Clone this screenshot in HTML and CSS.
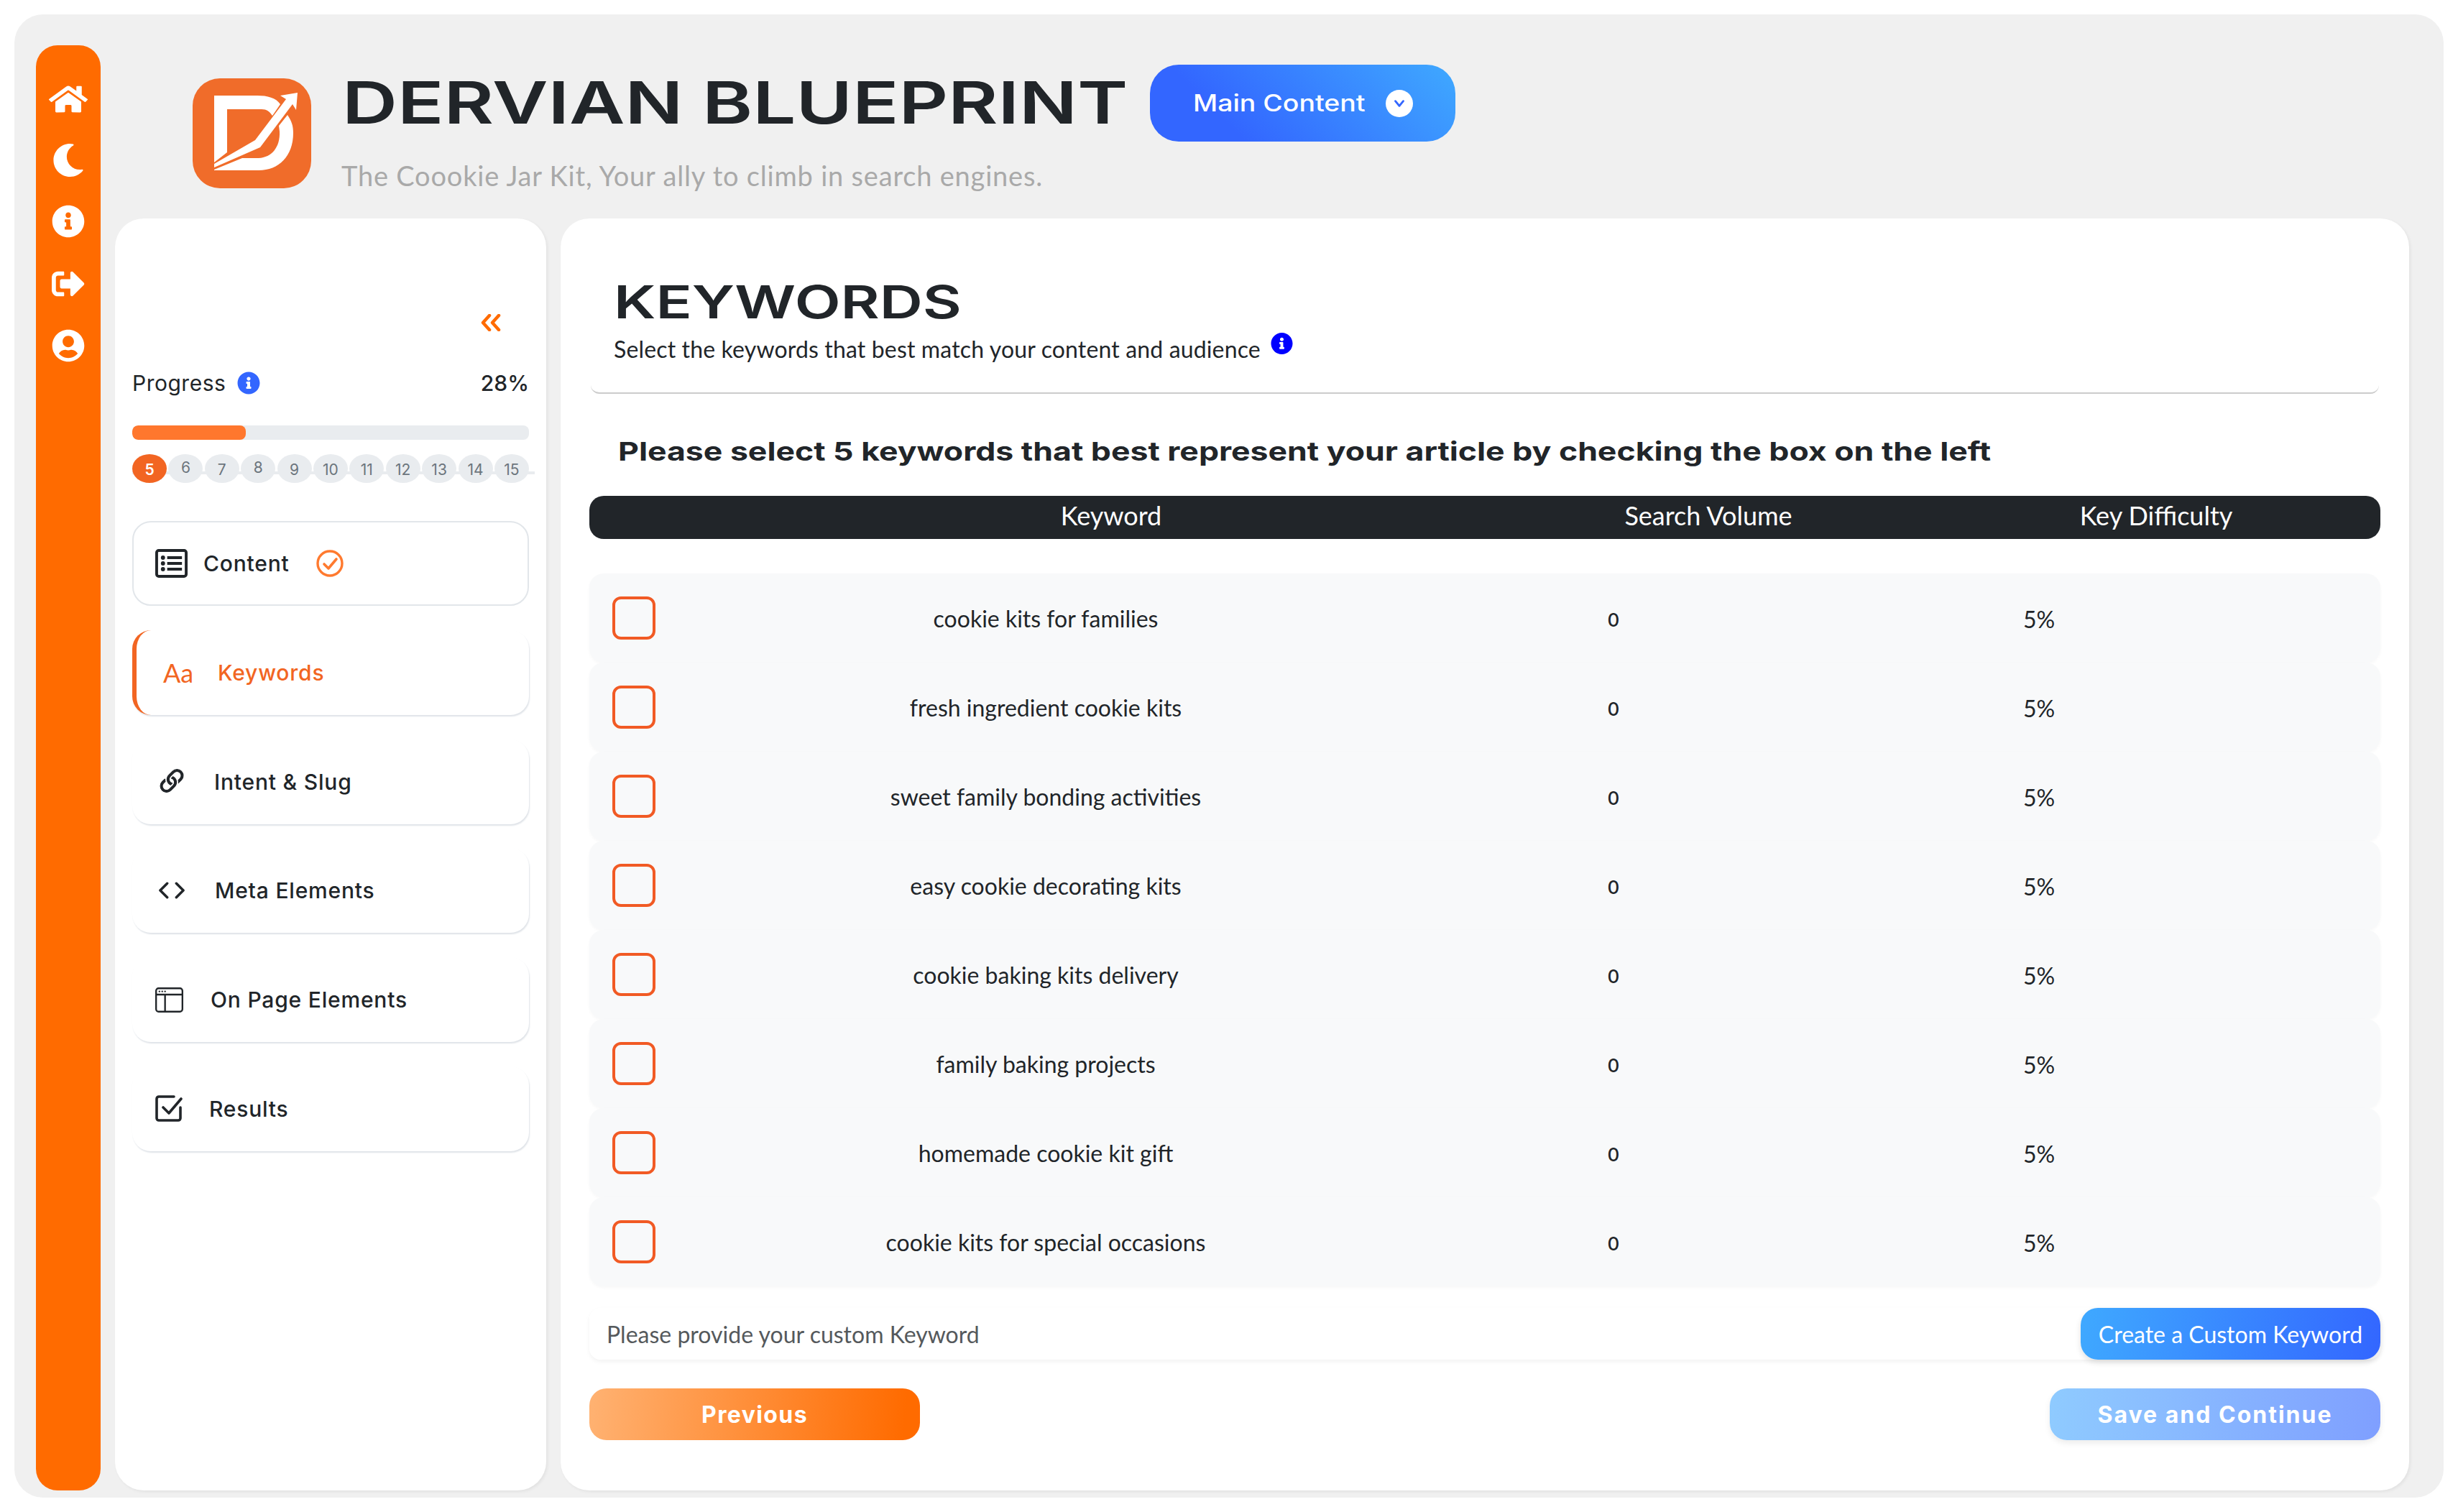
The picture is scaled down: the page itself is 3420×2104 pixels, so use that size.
FILE: index.html
```html
<!DOCTYPE html>
<html lang="en">
<head>
<meta charset="utf-8">
<title>Dervian Blueprint - Keywords</title>
<link rel="stylesheet" href="styles.css">
</head>
<body>
<div class="shell">
  <nav class="rail">
    <svg class="rail-home" viewBox="0 0 576 512" preserveAspectRatio="none"><path d="M280.37 148.26L96 300.11V464a16 16 0 0 0 16 16l112.06-.29a16 16 0 0 0 15.92-16V368a16 16 0 0 1 16-16h64a16 16 0 0 1 16 16v95.64a16 16 0 0 0 16 16.05L464 480a16 16 0 0 0 16-16V300L295.67 148.26a12.19 12.19 0 0 0-15.3 0zM571.6 251.47L488 182.56V44.05a12 12 0 0 0-12-12h-56a12 12 0 0 0-12 12v72.61L318.47 43a48 48 0 0 0-61 0L4.34 251.47a12 12 0 0 0-1.6 16.9l25.5 31A12 12 0 0 0 45.15 301l235.22-193.74a12.19 12.19 0 0 1 15.3 0L530.9 301a12 12 0 0 0 16.9-1.6l25.5-31a12 12 0 0 0-1.7-16.93z"/></svg>
    <svg class="rail-ico" viewBox="0 0 512 512"><path d="M283.211 512c78.962 0 151.079-35.925 198.857-94.792 7.068-8.708-.639-21.43-11.562-19.35-124.203 23.654-238.262-71.576-238.262-196.954 0-72.222 38.662-138.635 101.498-174.394 9.686-5.512 7.25-20.197-3.756-22.23A258.156 258.156 0 0 0 283.211 0c-141.309 0-256 114.511-256 256 0 141.309 114.511 256 256 256z"/></svg>
    <svg class="rail-ico" viewBox="0 0 512 512"><path d="M256 8C119.043 8 8 119.083 8 256c0 136.997 111.043 248 248 248s248-111.003 248-248C504 119.083 392.957 8 256 8zm0 110c23.196 0 42 18.804 42 42s-18.804 42-42 42-42-18.804-42-42 18.804-42 42-42zm56 254c0 6.627-5.373 12-12 12h-88c-6.627 0-12-5.373-12-12v-24c0-6.627 5.373-12 12-12h12v-64h-12c-6.627 0-12-5.373-12-12v-24c0-6.627 5.373-12 12-12h64c6.627 0 12 5.373 12 12v100h12c6.627 0 12 5.373 12 12v24z"/></svg>
    <svg class="rail-ico rail-gap" viewBox="0 0 512 512"><path d="M497 273L329 441c-15 15-41 4.5-41-17v-96H152c-13.3 0-24-10.7-24-24v-96c0-13.3 10.7-24 24-24h136V88c0-21.4 25.9-32 41-17l168 168c9.3 9.4 9.3 24.6 0 34zM192 436v-40c0-6.6-5.4-12-12-12H96c-17.7 0-32-14.3-32-32V160c0-17.7 14.3-32 32-32h84c6.6 0 12-5.4 12-12V76c0-6.6-5.4-12-12-12H96c-53 0-96 43-96 96v192c0 53 43 96 96 96h84c6.6 0 12-5.4 12-12z"/></svg>
    <svg class="rail-ico" viewBox="0 0 496 512"><path d="M248 8C111 8 0 119 0 256s111 248 248 248 248-111 248-248S385 8 248 8zm0 96c48.6 0 88 39.4 88 88s-39.4 88-88 88-88-39.4-88-88 39.4-88 88-88zm0 344c-58.7 0-111.3-26.6-146.5-68.2 18.8-35.4 55.6-59.8 98.5-59.8 2.4 0 4.8.4 7.1 1.1 13 4.2 26.6 6.9 40.9 6.9 14.3 0 28-2.7 40.9-6.9 2.3-.7 4.7-1.1 7.1-1.1 42.9 0 79.7 24.4 98.5 59.8C359.3 421.4 306.7 448 248 448z"/></svg>
  </nav>

  <div class="column">
    <header class="top">
      <svg class="logo" viewBox="0 0 165 153" preserveAspectRatio="none">
        <rect width="165" height="153" rx="38" ry="38" fill="#f06c2a"/>
        <path fill="#fff" d="M30 24H90C104 24 116 27 122 36L111 52C107 46 103 43 96 43H48V103L30 117Z"/>
        <path fill="#fff" d="M30 119L87 86L130 29L122 24L146 20L144 44L139 36L94 96L30 124Z"/>
        <path fill="#fff" d="M30 127L69 111H92C110 110 122 96 121 74L120 66L132 51C138 60 140 66 140 76C140 108 120 128 92 128H30Z"/>
      </svg>
      <div class="brand">
        <div class="brand-row">
          <div class="brand-title"><h1>DERVIAN BLUEPRINT</h1></div>
          <button class="main-btn">
            <span class="main-btn-label"><span class="main-btn-text">Main Content</span></span>
            <span class="main-btn-dot">
              <svg viewBox="0 0 20 20"><path d="M5 7l5 6 5-6" fill="none" stroke="#3366ff" stroke-width="2.6" stroke-linecap="round" stroke-linejoin="round"/></svg>
            </span>
          </button>
        </div>
        <p class="brand-sub">The Coookie Jar Kit, Your ally to climb in search engines.</p>
      </div>
    </header>

    <div class="panels">
      <aside class="side">
        <svg class="collapse" viewBox="0 0 30 24"><path d="M13 2L4 12l9 10M26 2l-9 10 9 10" fill="none" stroke="#ff6b00" stroke-width="4.5" stroke-linecap="round" stroke-linejoin="round"/></svg>
        <div class="progress-head">
          <span class="progress-label">Progress</span>
          <svg class="progress-info" viewBox="0 0 512 512"><path d="M256 8C119.043 8 8 119.083 8 256c0 136.997 111.043 248 248 248s248-111.003 248-248C504 119.083 392.957 8 256 8zm0 110c23.196 0 42 18.804 42 42s-18.804 42-42 42-42-18.804-42-42 18.804-42 42-42zm56 254c0 6.627-5.373 12-12 12h-88c-6.627 0-12-5.373-12-12v-24c0-6.627 5.373-12 12-12h12v-64h-12c-6.627 0-12-5.373-12-12v-24c0-6.627 5.373-12 12-12h64c6.627 0 12 5.373 12 12v100h12c6.627 0 12 5.373 12 12v24z"/></svg>
          <span class="progress-pct">28%</span>
        </div>
        <div class="bar"><div class="bar-fill"></div></div>
        <div class="steps">
          <span class="step step-on">5</span>
          <span class="step step-up">6</span>
          <span class="step">7</span>
          <span class="step step-up">8</span>
          <span class="step">9</span>
          <span class="step">10</span>
          <span class="step">11</span>
          <span class="step">12</span>
          <span class="step">13</span>
          <span class="step">14</span>
          <span class="step">15</span>
        </div>
        <ul class="nav">
          <li class="nav-item nav-done">
            <svg class="ni ni-list" viewBox="0 0 46 40" preserveAspectRatio="none"><rect x="2" y="2" width="42" height="36" rx="3" fill="none" stroke="#212529" stroke-width="4"/><g fill="#212529"><circle cx="11" cy="12" r="3"/><circle cx="11" cy="20" r="3"/><circle cx="11" cy="28" r="3"/><rect x="17" y="10" width="21" height="4"/><rect x="17" y="18" width="21" height="4"/><rect x="17" y="26" width="21" height="4"/></g></svg>
            <span>Content</span>
            <svg class="ni-check" viewBox="0 0 38 38"><circle cx="19" cy="19" r="17" fill="none" stroke="#ff7a2f" stroke-width="3.4"/><path d="M11 20l6 6 11-13" fill="none" stroke="#ff7a2f" stroke-width="3.6" stroke-linecap="round" stroke-linejoin="round"/></svg>
          </li>
          <li class="nav-item nav-active">
            <span class="aa">Aa</span>
            <span>Keywords</span>
          </li>
          <li class="nav-item">
            <svg class="ni ni-link" viewBox="0 0 16 16"><g fill="#212529" stroke="#212529" stroke-width=".4"><path d="M4.715 6.542 3.343 7.914a3 3 0 1 0 4.243 4.243l1.828-1.829A3 3 0 0 0 8.586 5.5L8 6.086a1.002 1.002 0 0 0-.154.199 2 2 0 0 1 .861 3.337L6.88 11.45a2 2 0 1 1-2.83-2.83l.793-.792a4.018 4.018 0 0 1-.128-1.287z"/><path d="M6.586 4.672A3 3 0 0 0 7.414 9.5l.775-.776a2 2 0 0 1-.896-3.346L9.12 3.55a2 2 0 1 1 2.83 2.83l-.793.792c.112.42.155.855.128 1.287l1.372-1.372a3 3 0 1 0-4.243-4.243L6.586 4.672z"/></g></svg>
            <span>Intent &amp; Slug</span>
          </li>
          <li class="nav-item">
            <svg class="ni ni-code" viewBox="0 0 39 24"><path d="M13 2L3 12l10 10M26 2l10 10-10 10" fill="none" stroke="#212529" stroke-width="3.6" stroke-linecap="round" stroke-linejoin="round"/></svg>
            <span>Meta Elements</span>
          </li>
          <li class="nav-item">
            <svg class="ni ni-win" viewBox="0 0 40 35" preserveAspectRatio="none"><rect x="1.2" y="1.2" width="37.6" height="32.6" rx="3.5" fill="none" stroke="#212529" stroke-width="2.4"/><path d="M1 10h38M14 10v24" stroke="#212529" stroke-width="2.4"/><g fill="#212529"><circle cx="6" cy="5.6" r="1.2"/><circle cx="10" cy="5.6" r="1.2"/><circle cx="14" cy="5.6" r="1.2"/></g></svg>
            <span>On Page Elements</span>
          </li>
          <li class="nav-item">
            <svg class="ni ni-res" viewBox="0 0 38 37"><path d="M26 2H5a3 3 0 0 0-3 3v27a3 3 0 0 0 3 3h27a3 3 0 0 0 3-3V17" fill="none" stroke="#212529" stroke-width="3.6" stroke-linecap="round"/><path d="M11 17l8 8L36 5" fill="none" stroke="#212529" stroke-width="3.6" stroke-linecap="round" stroke-linejoin="round"/></svg>
            <span>Results</span>
          </li>
        </ul>
      </aside>

      <main class="main">
        <div class="main-head">
          <h2>KEYWORDS</h2>
          <div class="main-sub">
            <span>Select the keywords that best match your content and audience</span>
            <svg class="main-info" viewBox="0 0 512 512"><path d="M256 8C119.043 8 8 119.083 8 256c0 136.997 111.043 248 248 248s248-111.003 248-248C504 119.083 392.957 8 256 8zm0 110c23.196 0 42 18.804 42 42s-18.804 42-42 42-42-18.804-42-42 18.804-42 42-42zm56 254c0 6.627-5.373 12-12 12h-88c-6.627 0-12-5.373-12-12v-24c0-6.627 5.373-12 12-12h12v-64h-12c-6.627 0-12-5.373-12-12v-24c0-6.627 5.373-12 12-12h64c6.627 0 12 5.373 12 12v100h12c6.627 0 12 5.373 12 12v24z"/></svg>
          </div>
        </div>
        <h3>Please select 5 keywords that best represent your article by checking the box on the left</h3>
        <div class="thead"><span>Keyword</span><span>Search Volume</span><span>Key Difficulty</span></div>
        <div class="rows">
          <div class="row"><span class="box"></span><span>cookie kits for families</span><span class="zero">0</span><span class="pct">5%</span></div>
          <div class="row"><span class="box"></span><span>fresh ingredient cookie kits</span><span class="zero">0</span><span class="pct">5%</span></div>
          <div class="row"><span class="box"></span><span>sweet family bonding activities</span><span class="zero">0</span><span class="pct">5%</span></div>
          <div class="row"><span class="box"></span><span>easy cookie decorating kits</span><span class="zero">0</span><span class="pct">5%</span></div>
          <div class="row"><span class="box"></span><span>cookie baking kits delivery</span><span class="zero">0</span><span class="pct">5%</span></div>
          <div class="row"><span class="box"></span><span>family baking projects</span><span class="zero">0</span><span class="pct">5%</span></div>
          <div class="row"><span class="box"></span><span>homemade cookie kit gift</span><span class="zero">0</span><span class="pct">5%</span></div>
          <div class="row"><span class="box"></span><span>cookie kits for special occasions</span><span class="zero">0</span><span class="pct">5%</span></div>
        </div>
        <div class="custom">
          <div class="custom-field">Please provide your custom Keyword</div>
          <button class="custom-btn">Create a Custom Keyword</button>
        </div>
        <div class="foot">
          <button class="prev">Previous</button>
          <button class="save">Save and Continue</button>
        </div>
      </main>
    </div>
  </div>
</div>
</body>
</html>
```
FILE: styles.css
```css
* { box-sizing: border-box; }
html, body { margin: 0; padding: 0; background: #fff; }
body { font-family: "Lato", "Liberation Sans", sans-serif; color: #212529; }
h1, h2, h3, p, ul { margin: 0; padding: 0; }
button { border: 0; font-family: inherit; color: #fff; padding: 0; }

.shell {
  margin: 20px;
  width: 3380px;
  height: 2064px;
  display: flex;
  gap: 20px;
  padding: 43px 48px 10px 30px;
  background: #f0f0f0;
  border-radius: 40px;
}

.rail {
  width: 90px;
  flex: none;
  background: #ff6b00;
  border-radius: 30px;
  display: flex;
  flex-direction: column;
  align-items: center;
  padding-top: 54px;
}
.rail svg { fill: #fff; display: block; }
.rail-home { width: 54px; height: 42px; margin-bottom: 41px; }
.rail-ico { width: 46px; height: 46px; margin-bottom: 39px; }
.rail-gap { margin-top: 2px; margin-bottom: 40px; }

.column { flex: 1; display: flex; flex-direction: column; min-width: 0; }

.top { height: 241px; flex: none; display: flex; padding-left: 108px; }
.logo { width: 165px; height: 153px; margin-top: 46px; flex: none; }
.brand { margin-left: 42px; padding-top: 27px; }
.brand-row { display: flex; }
.brand-title { width: 1125px; height: 107px; }
h1 {
  width: max-content;
  font-family: "Inter", sans-serif;
  font-size: 81px;
  font-weight: 600;
  line-height: 107px;
  white-space: nowrap;
  margin-left: 1px;
  transform: scaleX(1.315);
  transform-origin: left center;
}
.main-btn {
  width: 425px;
  height: 107px;
  border-radius: 40px;
  background: linear-gradient(45deg, #3366ff 25%, #3fa9ff 100%);
  display: flex;
  align-items: center;
  padding-left: 60px;
}
.main-btn-label { font-family: "Inter", sans-serif; font-size: 32px; font-weight: 500; width: 268px; text-align: left; white-space: nowrap; }
.main-btn-text { display: inline-block; transform: scaleX(1.17); transform-origin: left center; }
.main-btn-dot { width: 38px; height: 38px; border-radius: 50%; background: #fff; display: flex; align-items: center; justify-content: center; }
.main-btn-dot svg { width: 22px; height: 22px; }
.brand-sub { margin-top: 27px; font-size: 38px; line-height: 40px; letter-spacing: .8px; color: #a9a9a9; white-space: nowrap; }

.panels { flex: 1; display: flex; gap: 20px; min-height: 0; }

.side {
  width: 600px;
  flex: none;
  background: #fff;
  border-radius: 40px;
  box-shadow: 2px 2px 4px rgba(0,0,0,.06);
  padding: 133px 24px 0 24px;
}
.collapse { display: block; width: 30px; height: 24px; margin-left: auto; margin-right: 38px; }
.progress-head { margin-top: 54px; height: 36px; display: flex; align-items: center; font-family: "Inter", sans-serif; font-size: 30px; }
.progress-label { letter-spacing: .5px; }
.progress-info { width: 32px; height: 32px; margin-left: 16px; fill: #3366ff; }
.progress-pct { margin-left: auto; font-weight: 500; }
.bar { margin-top: 41px; height: 20px; background: #e9ecef; border-radius: 8px; overflow: hidden; }
.bar-fill { width: 28.6%; height: 100%; background: #ff772d; border-radius: 8px; }
.steps {
  position: relative;
  margin-top: 20px;
  height: 40px;
  display: flex;
  justify-content: space-between;
  font-family: "Inter", sans-serif;
  font-size: 21px;
}
.steps::before { content: ""; position: absolute; left: 0; right: -8px; top: 24px; height: 4px; background: #e9ecef; }
.step {
  position: relative;
  width: 48px;
  height: 40px;
  border-radius: 50%;
  background: #e9ecef;
  color: #6c757d;
  display: flex;
  align-items: center;
  justify-content: center;
  padding-top: 2px;
}
.step-up { padding-top: 0; padding-bottom: 3px; }
.step-on { background: #f26522; color: #fff; font-weight: 600; }

.nav { list-style: none; margin-top: 53px; display: flex; flex-direction: column; gap: 33.8px; }
.nav-item {
  height: 118px;
  border-radius: 26px;
  background: #fff;
  box-shadow: 1px 2px 2px #dfe3e8;
  display: flex;
  align-items: center;
  padding-left: 32px;
  font-family: "Inter", sans-serif;
  font-size: 30px;
  font-weight: 500;
  letter-spacing: .8px;
}
.nav-done { border: 2px solid #e2e6ea; padding-left: 30px; box-shadow: none; }
.nav-active { border-left: 6px solid #f26522; padding-left: 37px; color: #f26522; }
.aa { width: 39px; margin-right: 37px; font-family: "Lato", sans-serif; font-size: 36px; font-weight: 400; white-space: nowrap; letter-spacing: 0; }
.ni { flex: none; display: block; }
.ni-list { width: 45px; height: 40px; margin-right: 22px; }
.ni-check { width: 38px; height: 38px; margin-left: 37px; }
.ni-link { width: 46px; height: 46px; margin: 0 36px 0 0; }
.ni-code { width: 38px; height: 24px; margin: 0 41px 0 4px; }
.ni-win { width: 39px; height: 35px; margin-right: 38px; }
.ni-res { width: 38px; height: 37px; margin-right: 37px; }

.main {
  flex: 1;
  background: #fff;
  border-radius: 40px;
  box-shadow: 2px 2px 4px rgba(0,0,0,.06);
  padding: 0 40px;
  min-width: 0;
}
.main-head { margin: 0 2px; padding: 81px 0 40px 32px; border-bottom: 2px solid #ccc; border-radius: 0 0 12px 12px; }
h2 {
  width: max-content;
  font-family: "Inter", sans-serif;
  font-size: 63px;
  font-weight: 600;
  line-height: 70px;
  transform: scaleX(1.32);
  transform-origin: left center;
}
.main-sub { margin-top: 11px; display: flex; align-items: flex-start; font-size: 32px; line-height: 40px; letter-spacing: .15px; white-space: nowrap; }
.main-info { width: 31px; height: 32px; margin: -4px 0 0 14px; fill: #0000ff; }
h3 {
  width: max-content;
  margin: 55px 0 0 40px;
  font-family: "Inter", sans-serif;
  font-size: 36px;
  font-weight: 700;
  line-height: 50px;
  white-space: nowrap;
  transform: scaleX(1.238);
  transform-origin: left center;
}

.thead {
  margin-top: 37px;
  height: 60px;
  display: grid;
  grid-template-columns: 1040px 622px 624px;
  padding-left: 206px;
  padding-bottom: 6px;
  align-items: center;
  text-align: center;
  background: #212529;
  border-radius: 20px;
  color: #fff;
  font-size: 36px;
}
.rows { margin-top: 48px; }
.row {
  height: 124px;
  display: grid;
  grid-template-columns: 60px 1086px 494px 690px;
  padding-left: 32px;
  align-items: center;
  text-align: center;
  background: #f8f9fa;
  border-radius: 20px;
  box-shadow: 0 2px 4px rgba(0,0,0,.03);
  font-size: 32px;
}
.box { width: 60px; height: 60px; border: 4px solid #f15a24; border-radius: 12px; }
.zero { font-family: "Inter", sans-serif; font-size: 26px; font-weight: 500; padding-top: 4px; }
.pct { font-size: 32px; padding-top: 2px; }

.custom {
  margin-top: 30px;
  height: 72px;
  display: flex;
  justify-content: space-between;
  border-radius: 16px;
  box-shadow: 0 3px 6px rgba(0,0,0,.05);
}
.custom-field { width: 2069px; padding-left: 24px; display: flex; align-items: center; font-size: 32px; color: #55595c; background: #fff; border-radius: 16px; }
.custom-btn {
  width: 417px;
  border-radius: 24px;
  background: linear-gradient(100deg, #3fa9ff, #3366ff);
  font-size: 32px;
  box-shadow: 0 4px 8px rgba(0,0,0,.12);
}
.foot { margin-top: 40px; display: flex; justify-content: space-between; }
.prev, .save { width: 460px; height: 72px; border-radius: 24px; font-family: "Inter", sans-serif; font-size: 32px; font-weight: 700; }
.prev { letter-spacing: 1.4px; background: linear-gradient(95deg, #ffb272, #ff6b00 95%); }
.save { letter-spacing: 2px; background: linear-gradient(95deg, #8fcbff, #7f9fff); box-shadow: 0 4px 8px rgba(0,0,0,.08); }
```
